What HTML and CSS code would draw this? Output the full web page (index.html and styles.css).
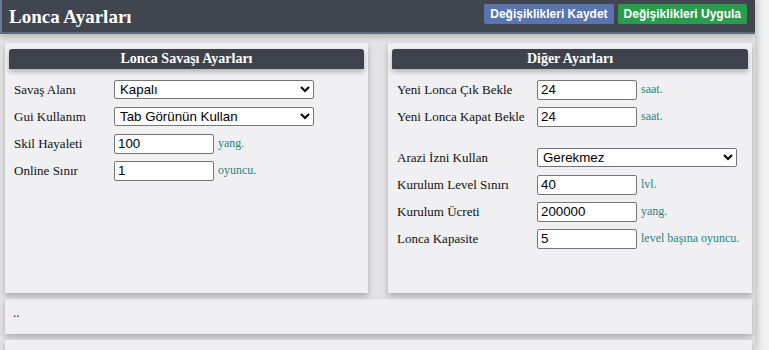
FILE: index.html
```html
<!DOCTYPE html>
<html lang="tr">
<head>
    <meta charset="UTF-8">
    <meta name="viewport" content="width=device-width, initial-scale=1.0">
    <title>Lonca Ayarları</title>
    <link rel="stylesheet" href="styles.css">
</head>
<body>
    <div class="page">
        <div class="topbar">
            <h1 class="topbar-title">Lonca Ayarları</h1>
            <div class="actions">
                <button class="btn btn-save">Değişiklikleri Kaydet</button>
                <button class="btn btn-apply">Değişiklikleri Uygula</button>
            </div>
        </div>

        <div class="panels">
            <div class="panel">
                <div class="panel-title">Lonca Savaşı Ayarları</div>
                <div class="form form-left">
                    <div class="row">
                        <label>Savaş Alanı</label>
                        <select class="field-wide"><option>Kapalı</option></select>
                    </div>
                    <div class="row">
                        <label>Gui Kullanım</label>
                        <select class="field-wide"><option>Tab Görünün Kullan</option></select>
                    </div>
                    <div class="row">
                        <label>Skil Hayaleti</label>
                        <input type="text" class="field" value="100">
                        <span class="unit">yang.</span>
                    </div>
                    <div class="row">
                        <label>Online Sınır</label>
                        <input type="text" class="field" value="1">
                        <span class="unit">oyuncu.</span>
                    </div>
                </div>
            </div>

            <div class="panel">
                <div class="panel-title">Diğer Ayarları</div>
                <div class="form form-right">
                    <div class="row">
                        <label>Yeni Lonca Çık Bekle</label>
                        <input type="text" class="field" value="24">
                        <span class="unit">saat.</span>
                    </div>
                    <div class="row">
                        <label>Yeni Lonca Kapat Bekle</label>
                        <input type="text" class="field" value="24">
                        <span class="unit">saat.</span>
                    </div>
                    <div class="spacer"></div>
                    <div class="row">
                        <label>Arazi İzni Kullan</label>
                        <select class="field-wide"><option>Gerekmez</option></select>
                    </div>
                    <div class="row">
                        <label>Kurulum Level Sınırı</label>
                        <input type="text" class="field" value="40">
                        <span class="unit">lvl.</span>
                    </div>
                    <div class="row">
                        <label>Kurulum Ücreti</label>
                        <input type="text" class="field" value="200000">
                        <span class="unit">yang.</span>
                    </div>
                    <div class="row">
                        <label>Lonca Kapasite</label>
                        <input type="text" class="field" value="5">
                        <span class="unit">level başına oyuncu.</span>
                    </div>
                </div>
            </div>
        </div>

        <div class="box note">..</div>
        <div class="box"></div>
    </div>
</body>
</html>
```

FILE: styles.css
```css
* {
    box-sizing: border-box;
}
body {
    margin: 0;
    padding: 0;
    background-color: #f1f1f2;
    font-family: "Liberation Serif", "Times New Roman", serif;
    font-size: 13px;
    color: #111;
}
.page {
    width: 755px;
    height: 350px;
    background-color: #e4e4e6;
    box-shadow: 3px 0 6px rgba(0, 0, 0, 0.18);
    overflow: hidden;
}

/* top bar */
.topbar {
    display: flex;
    justify-content: space-between;
    align-items: flex-start;
    height: 34px;
    background-color: #41454f;
    border-left: 2px solid #6a7c93;
    border-bottom: 2px solid #5b6a7e;
    padding: 4px 8px 0 7px;
    box-shadow: 0 3px 6px rgba(0, 0, 0, 0.2);
}
.topbar-title {
    margin: 2px 0 0 0;
    font-size: 19px;
    font-weight: bold;
    color: #fff;
}
.actions {
    display: flex;
    gap: 4px;
}
.btn {
    height: 20px;
    padding: 0 6px;
    border: none;
    border-radius: 2px;
    font-family: "Liberation Sans", Arial, sans-serif;
    font-size: 12px;
    font-weight: bold;
    color: #fff;
}
.btn-save {
    background-color: #5a74ad;
}
.btn-apply {
    background-color: #2a9d4c;
}

/* panels */
.panels {
    display: grid;
    grid-template-columns: 363px 364px;
    gap: 20px;
    padding: 9px 0 0 5px;
}
.panel {
    height: 250px;
    background-color: #f0eff2;
    box-shadow: 0 3px 6px rgba(0, 0, 0, 0.25);
    padding: 6px 4px 0 4px;
}
.panel-title {
    height: 20px;
    line-height: 20px;
    background-color: #3e424c;
    border-radius: 3px 3px 0 0;
    color: #fff;
    font-size: 14px;
    font-weight: bold;
    text-align: center;
    box-shadow: 0 3px 5px rgba(0, 0, 0, 0.25);
}
.form {
    padding: 7px 0 0 5px;
}
.row {
    display: flex;
    align-items: center;
    height: 27px;
}
.form-left label {
    width: 100px;
}
.form-right label {
    width: 140px;
}
.spacer {
    height: 14px;
}
.field,
.field-wide {
    font-family: "Liberation Sans", Arial, sans-serif;
    font-size: 13.3px;
    color: #000;
    background-color: #fff;
    border: 1px solid #767676;
    border-radius: 2px;
    margin: 0;
}
.field {
    width: 100px;
    height: 20px;
    padding: 1px 3px;
}
.field-wide {
    width: 200px;
    height: 19px;
    padding: 0 1px;
}
.unit {
    margin-left: 4px;
    font-size: 12px;
    color: #1f8686;
}

/* bottom boxes */
.box {
    margin: 6px 3px 0 5px;
    height: 35px;
    background-color: #f0eff2;
    box-shadow: 0 3px 6px rgba(0, 0, 0, 0.25);
}
.note {
    padding: 6px 8px;
}
```
